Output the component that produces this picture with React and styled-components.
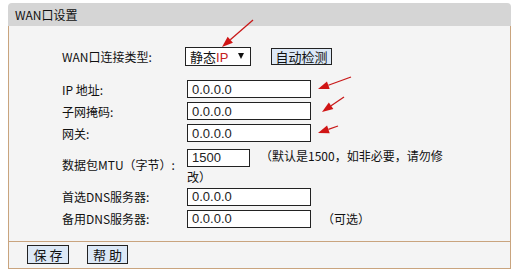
import React from 'react'
import styled, { createGlobalStyle } from 'styled-components'

const GlobalStyle = createGlobalStyle`
  body {
    margin: 0;
    background: #fff;
    font-family: "Noto Sans CJK SC", "Noto Sans", sans-serif;
    font-size: 12px;
    color: #111;
  }
`

const Tan = '#c9a47e'

const Page = styled.div`
  position: relative;
  width: 521px;
  height: 274px;
  padding: 3px 0 0 8px;
  box-sizing: border-box;
  overflow: hidden;
`

const Panel = styled.div`
  width: 503px;
`

const Header = styled.div`
  height: 23px;
  line-height: 23px;
  padding-left: 7px;
  background: #d5d5d5;
  border-radius: 4px 4px 0 0;
  font-size: 12px;
  color: #111;
`

const Body = styled.div`
  background: #f4f4f4;
  border-left: 1px solid ${Tan};
  border-right: 1px solid ${Tan};
  padding: 19px 0 11px 53px;
`

const Row = styled.div`
  display: grid;
  grid-template-columns: 125px auto;
  align-items: center;
  min-height: 22px;
  margin-bottom: ${(p) => p.$after || 0}px;
`

const Label = styled.div`
  font-size: 12px;
  color: #111;
`

const Field = styled.div`
  display: flex;
  align-items: center;
`

const Select = styled.div`
  margin-left: -2px;
  width: 66px;
  height: 19px;
  box-sizing: border-box;
  border: 1px solid #222;
  background: #fff;
  display: flex;
  align-items: center;
  justify-content: space-between;
  padding: 0 6px 0 4px;
  font-size: 13px;

  em {
    font-style: normal;
    font-family: "Liberation Sans", sans-serif;
    color: #c42020;
  }
`

const Caret = styled.span`
  width: 0;
  height: 0;
  border-left: 3.5px solid transparent;
  border-right: 3.5px solid transparent;
  border-top: 6px solid #111;
`

const Button = styled.button`
  height: ${(p) => p.$h || 19}px;
  width: ${(p) => p.$w}px;
  margin-left: ${(p) => p.$ml || 0}px;
  padding: 0;
  box-sizing: border-box;
  border: 1px solid #222;
  background: #dce8f6;
  font-family: "Noto Sans CJK SC", sans-serif;
  font-size: 13px;
  line-height: 1;
  color: #111;
  white-space: pre;
`

const Input = styled.input`
  width: ${(p) => p.$w || 124}px;
  height: 18px;
  box-sizing: border-box;
  border: 1px solid #222;
  background: #fff;
  padding: 0 0 0 4px;
  font-family: "Liberation Sans", sans-serif;
  font-size: 13px;
  color: #222;
  outline: none;
  vertical-align: middle;
`

const Note = styled.span`
  margin-left: ${(p) => p.$ml || 0}px;
  font-size: 12px;
`

const MtuCell = styled.div`
  line-height: 19px;
  padding-top: 2px;
`

const Footer = styled.div`
  height: 26px;
  background: #f4f4f4;
  border: 1px solid ${Tan};
  display: flex;
  align-items: center;
  gap: 18px;
  padding-left: 18px;
`

const Arrows = styled.svg`
  position: absolute;
  left: 0;
  top: 0;
  pointer-events: none;
`

const arrows = [
  [253, 20, 222, 47],
  [351, 77, 318, 89],
  [344, 97, 322, 112],
  [338, 126, 318, 133],
]

function Arrow({ x1, y1, x2, y2 }) {
  const dx = x2 - x1
  const dy = y2 - y1
  const len = Math.hypot(dx, dy)
  const ux = dx / len
  const uy = dy / len
  const hl = 11
  const hw = 4
  const bx = x2 - ux * hl
  const by = y2 - uy * hl
  const pts = `${x2},${y2} ${bx - uy * hw},${by + ux * hw} ${bx + uy * hw},${by - ux * hw}`
  return (
    <g>
      <line x1={x1} y1={y1} x2={bx} y2={by} stroke="#c81818" strokeWidth="1.3" />
      <polygon points={pts} fill="#d01515" />
    </g>
  )
}

export default function App() {
  return (
    <>
      <GlobalStyle />
      <Page>
        <Panel>
          <Header>WAN口设置</Header>
          <Body>
            <Row $after={11}>
              <Label>WAN口连接类型:</Label>
              <Field>
                <Select>
                  <span>静态<em>IP</em></span>
                  <Caret />
                </Select>
                <Button $w={61} $h={17} $ml={20}>自动检测</Button>
              </Field>
            </Row>
            <Row>
              <Label>IP 地址:</Label>
              <Field><Input defaultValue="0.0.0.0" /></Field>
            </Row>
            <Row>
              <Label>子网掩码:</Label>
              <Field><Input defaultValue="0.0.0.0" /></Field>
            </Row>
            <Row>
              <Label>网关:</Label>
              <Field><Input defaultValue="0.0.0.0" /></Field>
            </Row>
            <Row>
              <Label>数据包MTU（字节）:</Label>
              <MtuCell>
                <Input $w={63} defaultValue="1500" />
                <Note $ml={10}>（默认是1500，如非必要，请勿修</Note>
                <br />
                <Note>改）</Note>
              </MtuCell>
            </Row>
            <Row>
              <Label>首选DNS服务器:</Label>
              <Field><Input defaultValue="0.0.0.0" /></Field>
            </Row>
            <Row>
              <Label>备用DNS服务器:</Label>
              <Field>
                <Input defaultValue="0.0.0.0" />
                <Note $ml={11}>（可选）</Note>
              </Field>
            </Row>
          </Body>
          <Footer>
            <Button $w={42}>保 存</Button>
            <Button $w={41}>帮 助</Button>
          </Footer>
        </Panel>
        <Arrows width="521" height="274">
          {arrows.map(([x1, y1, x2, y2], i) => (
            <Arrow key={i} x1={x1} y1={y1} x2={x2} y2={y2} />
          ))}
        </Arrows>
      </Page>
    </>
  )
}
